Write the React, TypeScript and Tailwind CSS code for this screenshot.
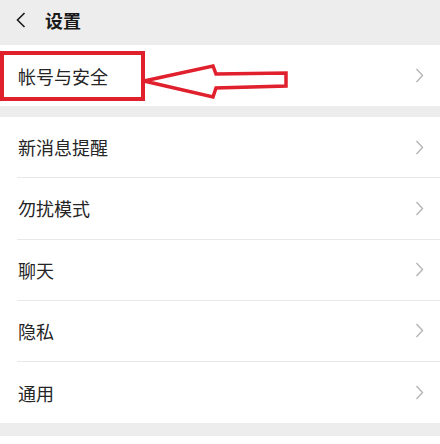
import React from 'react';

const items = ['新消息提醒', '勿扰模式', '聊天', '隐私', '通用'];

const Chevron = () => (
  <svg width="9" height="15" viewBox="0 0 9 15" className="shrink-0">
    <polyline points="1.5,1 7.5,7.5 1.5,14" fill="none" stroke="#b5b5b5" strokeWidth="1.4" />
  </svg>
);

const Row: React.FC<{ label: string; last?: boolean }> = ({ label, last }) => (
  <div className="h-[61.2px] pl-[17px] flex">
    <div
      className={`flex-1 flex items-center justify-between pr-[16px] pl-[1px] ${
        last ? '' : 'border-b border-[#e8e8e8]'
      }`}
    >
      <span className="text-[18px] text-[#252525] leading-none">{label}</span>
      <Chevron />
    </div>
  </div>
);

export default function App() {
  return (
    <div
      className="relative w-[440px] h-[444px] overflow-hidden bg-[#ededed]"
      style={{ fontFamily: '"Noto Sans CJK SC", "Noto Sans", sans-serif' }}
    >
      <div className="h-[45px] flex items-center pl-[16px] pb-[6px]">
        <svg width="10" height="16" viewBox="0 0 10 16">
          <polyline points="8.5,1 1.5,8 8.5,15" fill="none" stroke="#1a1a1a" strokeWidth="1.6" />
        </svg>
        <span className="ml-[19px] text-[18px] font-bold text-[#1a1a1a] leading-none">设置</span>
      </div>

      <div className="bg-white">
        <Row label="帐号与安全" last />
      </div>

      <div className="h-[11px]" />

      <div className="bg-white">
        {items.map((label, i) => (
          <Row key={label} label={label} last={i === items.length - 1} />
        ))}
      </div>

      <div className="h-[13px]" />
      <div className="h-[8px] bg-white" />

      {/* red annotation */}
      <div className="absolute left-0 top-[51px] w-[145px] h-[50px] border-[4px] border-[#e0202c]" />
      <svg className="absolute left-0 top-0 pointer-events-none" width="440" height="444">
        <polygon
          points="144,81 213,66 216,74 286,73 286,86 216,88 213,97"
          fill="none"
          stroke="#e0202c"
          strokeWidth="3.5"
          strokeLinejoin="miter"
        />
      </svg>
    </div>
  );
}
